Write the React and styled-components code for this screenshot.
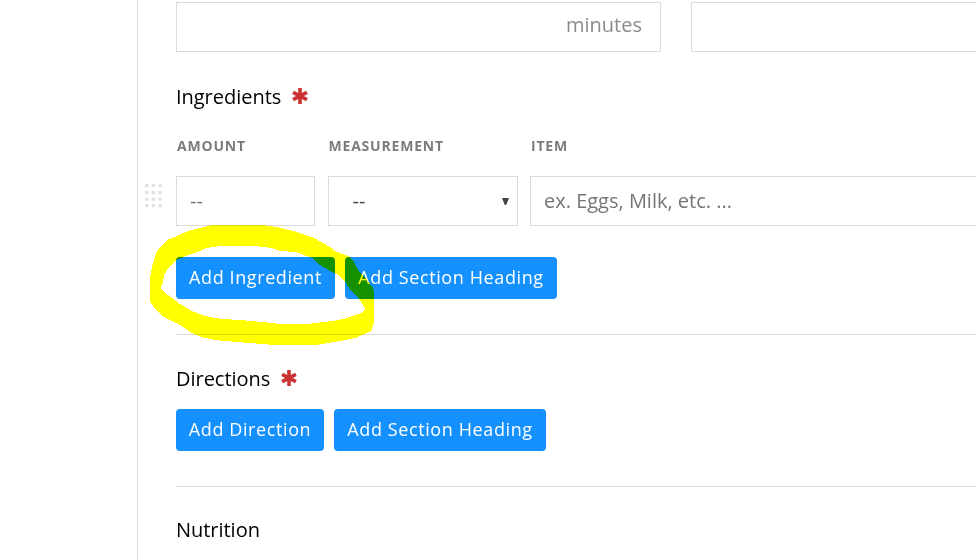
import React from "react";
import styled, { createGlobalStyle } from "styled-components";

const Global = createGlobalStyle`
  *, *::before, *::after { box-sizing: border-box; }
  body { margin: 0; background: #fff; overflow: hidden; }
  button, input { font-family: inherit; }
`;

const Page = styled.main`
  position: relative;
  display: flex;
  width: 976px;
  height: 560px;
  overflow: hidden;
  font-family: "Open Sans", sans-serif;
  color: #000;
`;

const Gutter = styled.div`
  flex: 0 0 138px;
  border-right: 1px solid #dbdbdb;
`;

const Form = styled.div`
  flex: 1;
  min-width: 0;
  padding: 2px 0 0 38px;
`;

const TimeRow = styled.div`
  display: flex;
  gap: 30px;
`;

const Field = styled.div`
  display: flex;
  flex: 0 0 ${(p) => p.$width}px;
  align-items: center;
  height: 50px;
  padding: 0 ${(p) => p.$end ?? 13}px 0 ${(p) => p.$start ?? 13}px;
  border: 1px solid #dbdbdb;
  background: #fff;
`;

const Suffix = styled.span`
  margin: -4px 0 0 auto;
  font-size: 20px;
  line-height: 28px;
  color: #8b8b8b;
`;

const Placeholder = styled.span`
  font-size: 20px;
  line-height: 28px;
  white-space: nowrap;
  color: ${(p) => p.$color ?? "#757575"};
`;

const Section = styled.section`
  padding-top: ${(p) => p.$top}px;
  height: ${(p) => p.$height}px;
  border-bottom: 1px solid #dbdbdb;
`;

const Heading = styled.h2`
  display: flex;
  align-items: center;
  gap: 11px;
  margin: 0;
  height: 28px;
  font-size: 20px;
  font-weight: 400;
  line-height: 28px;
  letter-spacing: -0.03px;
`;

const Labels = styled.div`
  display: grid;
  grid-template-columns: 151.5px 202.5px auto;
  margin: 25px 0 20px 1px;
`;

const Label = styled.span`
  font-size: 14px;
  font-weight: 700;
  line-height: 20px;
  letter-spacing: 0.8px;
  color: #7c7c7c;
`;

const IngredientRow = styled.div`
  display: flex;
  align-items: center;
  margin-left: -32px;
`;

const Handle = styled.svg`
  flex: 0 0 18px;
  margin: -10px 14px 0 0;
`;

const Inputs = styled.div`
  display: grid;
  grid-template-columns: 139px 190px 480px;
  column-gap: 12.5px;
`;

const Arrow = styled.svg`
  margin: 1px 0 0 auto;
`;

const Actions = styled.div`
  display: flex;
  gap: 10px;
  margin-top: ${(p) => p.$top}px;
`;

const Button = styled.button`
  width: ${(p) => p.$width}px;
  height: 42px;
  padding: 0 0 2px;
  border: 0;
  border-radius: 4px;
  background: #1590ff;
  color: #fff;
  font-size: 18px;
  font-weight: 500;
  letter-spacing: 0.6px;
  white-space: nowrap;
`;

const Marker = styled.svg`
  position: absolute;
  inset: 0;
  pointer-events: none;
  mix-blend-mode: multiply;
`;

const Star = styled.svg`
  margin-top: -2px;
`;

function Required() {
  return (
    <Star width="16" height="16" viewBox="0 0 16 16" aria-label="Required">
      <path
        d="M8 0V16M1.1 4.4L14.9 11.6M14.9 4.4L1.1 11.6"
        stroke="#cc3232"
        strokeWidth="3.6"
      />
    </Star>
  );
}

function DragHandle() {
  return (
    <Handle width="18" height="24" viewBox="0 0 18 24" aria-label="Reorder">
      {[1, 7.7, 14.4].map((x) =>
        [0, 7, 13.5, 20].map((y) => (
          <rect key={`${x}-${y}`} x={x} y={y} width="3.4" height="3.2" fill="#e2e2e2" />
        ))
      )}
    </Handle>
  );
}

export default function App() {
  return (
    <Page>
      <Global />
      <Gutter />
      <Form>
        <TimeRow>
          <Field $width={485} $end={18}><Suffix>minutes</Suffix></Field>
          <Field $width={485} />
        </TimeRow>

        <Section $top={31} $height={283}>
          <Heading>Ingredients <Required /></Heading>
          <Labels>
            <Label>AMOUNT</Label>
            <Label>MEASUREMENT</Label>
            <Label>ITEM</Label>
          </Labels>
          <IngredientRow>
            <DragHandle />
            <Inputs>
              <Field $width={139}><Placeholder>--</Placeholder></Field>
              <Field $width={190} $start={24} $end={8}>
                <Placeholder $color="#444">--</Placeholder>
                <Arrow width="7" height="7" viewBox="0 0 7 7"><path d="M0 0H7L4.2 7H2.8Z" fill="#444" /></Arrow>
              </Field>
              <Field $width={480}><Placeholder>ex. Eggs, Milk, etc. ...</Placeholder></Field>
            </Inputs>
          </IngredientRow>
          <Actions $top={31}>
            <Button $width={159}>Add Ingredient</Button>
            <Button $width={212}>Add Section Heading</Button>
          </Actions>
        </Section>

        <Section $top={30} $height={152}>
          <Heading>Directions <Required /></Heading>
          <Actions $top={16}>
            <Button $width={148}>Add Direction</Button>
            <Button $width={212}>Add Section Heading</Button>
          </Actions>
        </Section>

        <Section $top={29} $height={90}>
          <Heading>Nutrition</Heading>
        </Section>
      </Form>
      <Marker width="976" height="560" viewBox="0 0 976 560" shapeRendering="crispEdges" aria-hidden="true">
        <path
          fill="#ff0"
          fillRule="evenodd"
          d="M212 225H262L277 227L297 232L314 238L330 247L335 251L348 256L354 262L359 271L367 280L373 288L374 292V323L371 331L356 338L340 341L322 344L315 345H274L262 344L236 342L215 340L201 337L192 333L180 325L164 317L155 309L151 303L150 300V278L152 267L156 253L160 247L167 240L177 236L188 231Z
             M161 287L163 283L164 275L169 267L175 261L188 255L200 251L206 248L220 246H255L272 248L280 251L296 252L304 255L312 258L318 264L332 272L340 276L346 283L350 290L359 299L363 305L365 309L361 313L347 318L333 321L314 323L307 324H281L262 322L240 320L222 319L205 316L192 311L180 304L168 295L162 290Z"
        />
      </Marker>
    </Page>
  );
}
